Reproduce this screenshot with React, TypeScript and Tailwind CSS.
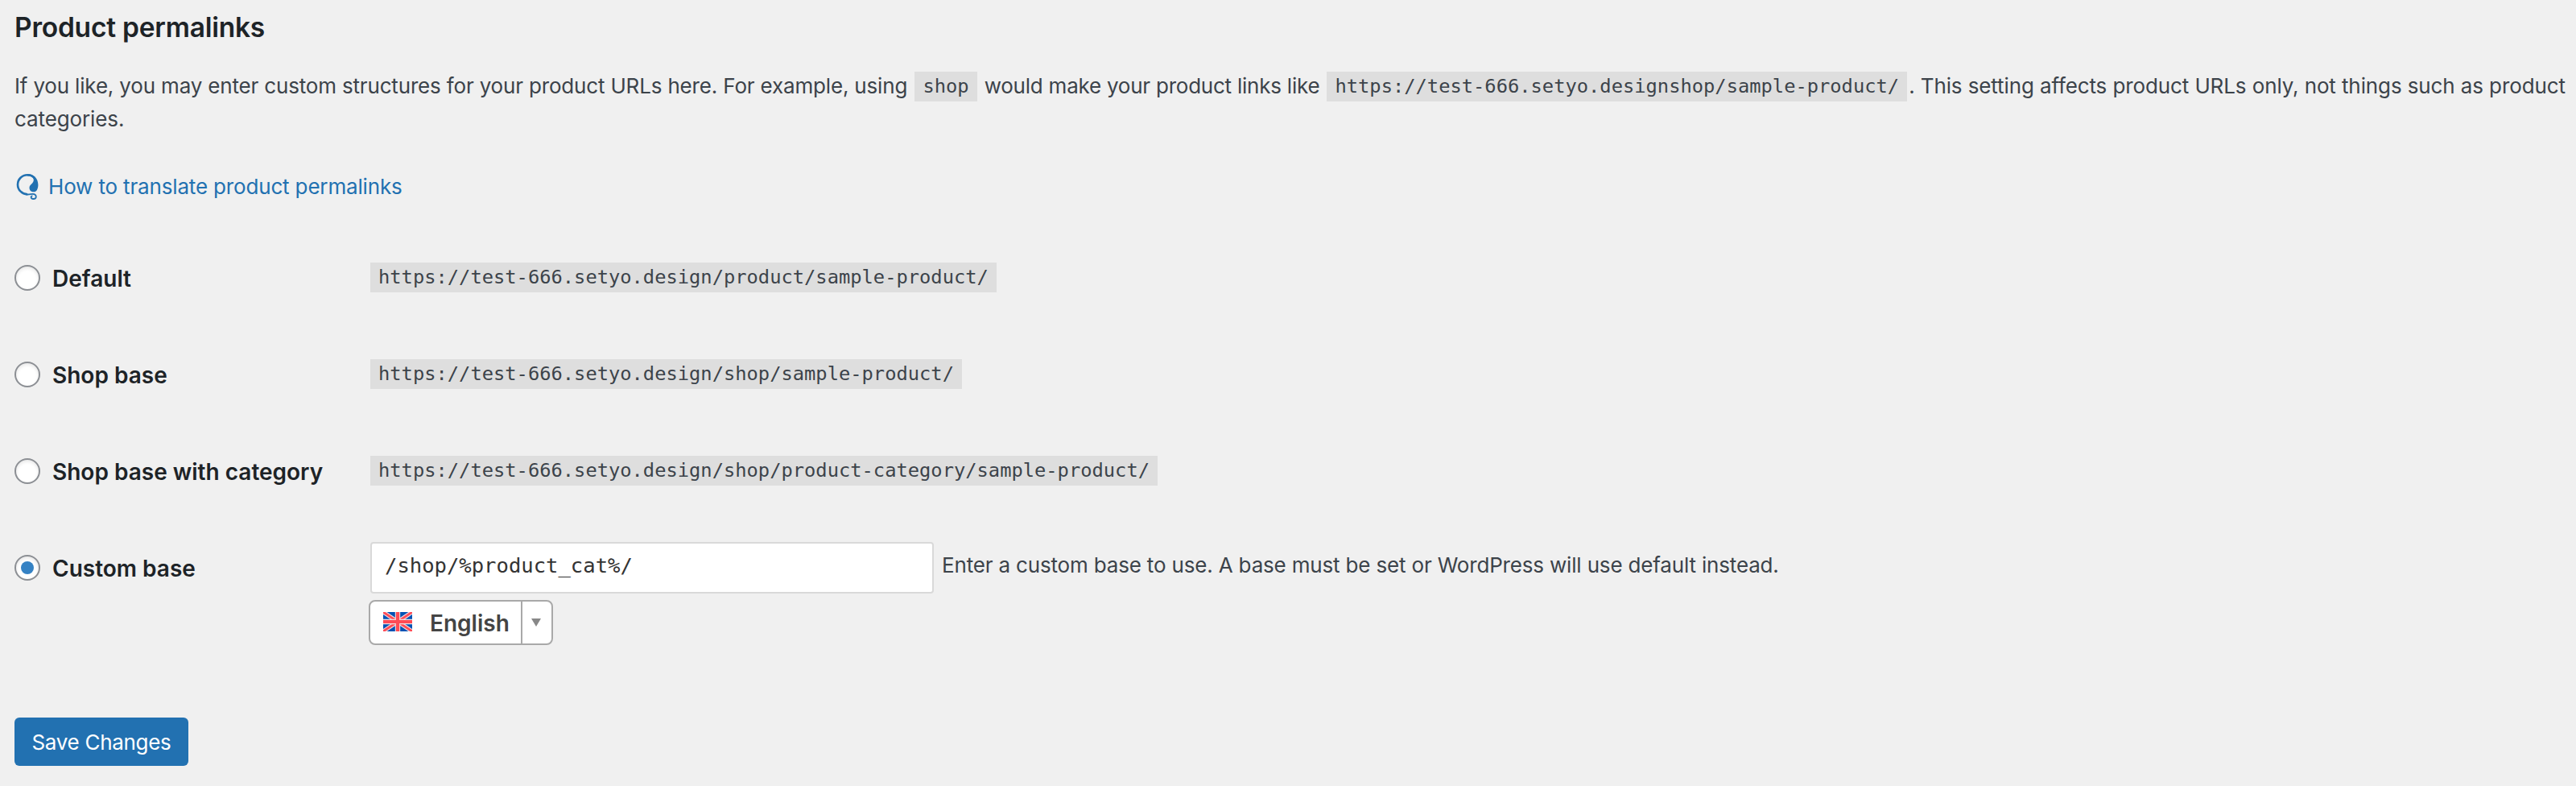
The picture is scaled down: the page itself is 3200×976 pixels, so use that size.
import type { ReactNode } from 'react';

const SITE = 'https://test-666.setyo.design';

const structures = [
  { label: 'Default', url: `${SITE}/product/sample-product/` },
  { label: 'Shop base', url: `${SITE}/shop/sample-product/` },
  { label: 'Shop base with category', url: `${SITE}/shop/product-category/sample-product/` },
];

function Code({ children }: { children: ReactNode }) {
  return (
    <code className="mx-[2px] bg-[#dedede] px-[10px] pt-[4px] pb-[5px] align-[1px] font-['DejaVu_Sans_Mono',monospace] text-[23.75px] leading-none tracking-normal">
      {children}
    </code>
  );
}

function Radio({ checked = false }: { checked?: boolean }) {
  return (
    <span className="flex h-8 w-8 shrink-0 items-center justify-center rounded-full border-2 border-[#8c8f94] bg-white shadow-[inset_0_2px_4px_rgba(0,0,0,0.1)]">
      {checked && <span className="h-4 w-4 rounded-full bg-[#3582c4]" />}
    </span>
  );
}

function RowLabel({ label, checked }: { label: string; checked?: boolean }) {
  return (
    <label className="flex w-[442px] shrink-0 items-center">
      <Radio checked={checked} />
      <span className="mt-[2px] ml-[15px] text-[28px] leading-[36px] font-semibold text-[#1d2327]">{label}</span>
    </label>
  );
}

function TranslateIcon() {
  return (
    <svg className="h-[34px] w-[28px]" viewBox="0 0 28 34" fill="none">
      {/* ring */}
      <path
        d="M23 6.2C20.8 3.7 17.6 2.3 14 2.3C7.3 2.3 2 7.6 2 14.2C2 21 7.4 26 14 26.4"
        stroke="#2271b1"
        strokeWidth="2.6"
      />
      {/* curl */}
      <path
        d="M13 26.4C16.6 26.8 18.4 25.8 20.6 25.9C23 26 24.8 27.4 24.8 29.2C24.8 31 23.2 32 21.4 32C19.8 32 18.6 31 18.6 29.8C18.6 28.8 19.4 28.2 20.4 28.4"
        stroke="#2271b1"
        strokeWidth="1.8"
      />
      {/* drop */}
      <path
        d="M14 1C21.8 1 27.4 6.8 27.4 14.4C27.4 19.6 25.3 23.3 21.9 23.3C18.7 23.3 16.5 21.1 16.5 18.2C16.5 14 21.8 12.8 21.8 8.4C21.8 5.4 18.6 3.4 14 3.4Z"
        fill="#2271b1"
      />
    </svg>
  );
}

function Flag() {
  return (
    <svg className="h-6 w-9" viewBox="0 0 36 24">
      <rect width="36" height="24" fill="#0052b4" />
      <path d="M0 0L36 24M36 0L0 24" stroke="#f0d8dc" strokeWidth="5.2" />
      <path d="M0 0L36 24M36 0L0 24" stroke="#ff4b55" strokeWidth="2.8" />
      <path d="M18 0V24M0 12H36" stroke="#f0dcdf" strokeWidth="6.4" />
      <path d="M18 0V24M0 12H36" stroke="#ff4b55" strokeWidth="4.2" />
    </svg>
  );
}

export default function App() {
  return (
    <div className="h-[976px] w-full bg-[#f0f0f0] px-[18px] pt-[11px] font-['Inter',sans-serif] text-[#3c434a]">
      <h2 className="text-[33.5px] leading-[47px] font-semibold tracking-[-0.22px] text-[#1d2327]">
        Product permalinks
      </h2>
      <p className="-mr-3 mt-[28px] text-[26px] leading-[41px] tracking-[-0.17px]">
        If you like, you may enter custom structures for your product URLs here. For example, using{' '}
        <Code>shop</Code>
        <span className="tracking-[-0.23px]"> would make your product links like </span>
        <Code>{SITE}shop/sample-product/</Code>
        <span className="tracking-[-0.11px]">
          . This setting affects product URLs only, not things such as product categories.
        </span>
      </p>
      <a href="#" className="mt-[44px] flex h-[40px] items-center text-[#2271b1]">
        <span className="mt-[-1px] ml-[2px]">
          <TranslateIcon />
        </span>
        <span className="ml-[12px] text-[26px] leading-[40px] tracking-[-0.16px]">
          How to translate product permalinks
        </span>
      </a>

      <div className="mt-[33px]">
        {structures.map(({ label, url }) => (
          <div key={label} className="flex h-[120px] items-center">
            <RowLabel label={label} />
            <div className="mb-[2px] -ml-[2px] text-[26px] leading-[36px]">
              <Code>{url}</Code>
            </div>
          </div>
        ))}
        <div className="flex pt-[28px]">
          <div className="flex h-[64px] items-center">
            <RowLabel label="Custom base" checked />
          </div>
          <div>
            <div className="flex items-center">
              <input
                type="text"
                defaultValue="/shop/%product_cat%/"
                className="h-[64px] w-[700px] rounded-[4px] border-2 border-[#d9d9d9] bg-white px-[16px] pb-[7px] font-['DejaVu_Sans_Mono',monospace] text-[25.57px] text-[#333333]"
              />
              <span className="mb-[7px] ml-[10px] text-[26px] leading-[40px] tracking-[-0.17px]">
                Enter a custom base to use. A base must be set or WordPress will use default instead.
              </span>
            </div>
            <button className="mt-[8px] -ml-[2px] flex h-[56px] w-[229px] rounded-[8px] border-2 border-[#a9a9a9] bg-white">
              <span className="flex h-full flex-1 items-center pl-[16px]">
                <span className="mb-[2px]">
                  <Flag />
                </span>
                <span className="mt-px ml-[22px] text-[28px] leading-[36px] font-semibold text-[#444444]">English</span>
              </span>
              <span className="flex h-full w-[38px] items-center justify-center border-l-2 border-[#a9a9a9]">
                <svg className="mr-[2px] h-[10px] w-[12px]" viewBox="0 0 12 10">
                  <path d="M0 0H12L6 10Z" fill="#888888" />
                </svg>
              </span>
            </button>
          </div>
        </div>
      </div>

      <button className="mt-[90px] h-[60px] w-[216px] rounded-[6px] bg-[#2271b1] text-[26px] tracking-[-0.3px] text-white">
        Save Changes
      </button>
    </div>
  );
}
